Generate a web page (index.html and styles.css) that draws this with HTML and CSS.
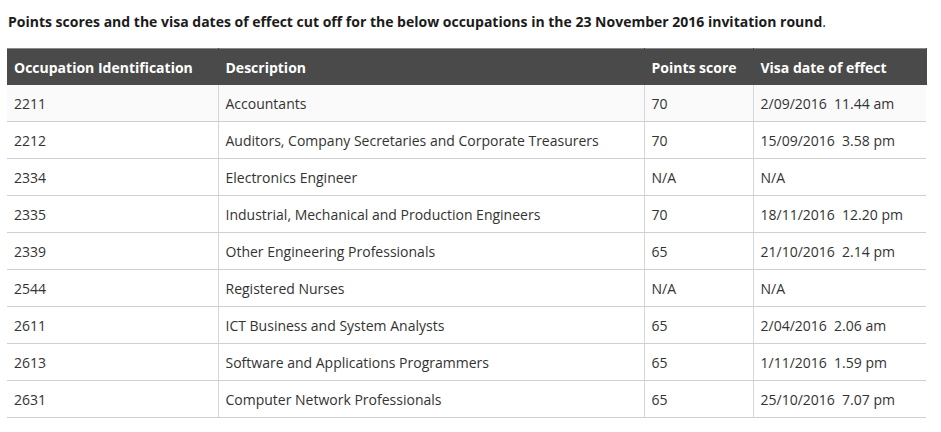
FILE: index.html
```html
<!DOCTYPE html>
<html lang="en">
<head>
<meta charset="utf-8">
<title>Invitation round</title>
<link rel="stylesheet" href="styles.css">
</head>
<body>
<div class="page">
  <p class="intro"><strong>Points scores and the visa dates of effect cut off for the below occupations in the 23 November 2016 invitation round</strong>.</p>
  <table class="occ">
    <colgroup>
      <col class="c1"><col class="c2"><col class="c3"><col class="c4">
    </colgroup>
    <thead>
      <tr><th>Occupation Identification</th><th>Description</th><th>Points score</th><th>Visa date of effect</th></tr>
    </thead>
    <tbody>
      <tr><td>2211</td><td>Accountants</td><td>70</td><td>2/09/2016&nbsp; 11.44 am</td></tr>
      <tr><td>2212</td><td>Auditors, Company Secretaries and Corporate Treasurers</td><td>70</td><td>15/09/2016&nbsp; 3.58 pm</td></tr>
      <tr><td>2334</td><td>Electronics Engineer</td><td>N/A</td><td>N/A</td></tr>
      <tr><td>2335</td><td>Industrial, Mechanical and Production Engineers</td><td>70</td><td>18/11/2016&nbsp; 12.20 pm</td></tr>
      <tr><td>2339</td><td>Other Engineering Professionals</td><td>65</td><td>21/10/2016&nbsp; 2.14 pm</td></tr>
      <tr><td>2544</td><td>Registered Nurses</td><td>N/A</td><td>N/A</td></tr>
      <tr><td>2611</td><td>ICT Business and System Analysts</td><td>65</td><td>2/04/2016&nbsp; 2.06 am</td></tr>
      <tr><td>2613</td><td>Software and Applications Programmers</td><td>65</td><td>1/11/2016&nbsp; 1.59 pm</td></tr>
      <tr><td>2631</td><td>Computer Network Professionals</td><td>65</td><td>25/10/2016&nbsp; 7.07 pm</td></tr>
    </tbody>
  </table>
</div>
</body>
</html>
```
FILE: styles.css
```css
html, body {
  margin: 0;
  padding: 0;
  background: #ffffff;
}
body {
  font-family: "Open Sans", "Liberation Sans", sans-serif;
  font-size: 14px;
  color: #333333;
}
.page {
  padding: 12px 15px 0 7px;
}
.intro {
  margin: 0 0 16px 1px;
  line-height: 20px;
  color: #1b1b1b;
}
.intro strong {
  font-weight: 700;
}
.occ {
  width: 919px;
  border-collapse: collapse;
  table-layout: fixed;
}
.c1 { width: 211px; }
.c2 { width: 426px; }
.c3 { width: 109px; }
.c4 { width: 173px; }
.occ th {
  background: #4a4a4a;
  color: #ffffff;
  font-weight: 700;
  text-align: left;
  height: 36px;
  padding: 0 7px;
  border-top: 1px solid #8a8a8a;
  border-right: 1px solid #4a4a4a;
  white-space: nowrap;
}
.occ td {
  height: 36px;
  padding: 0 7px;
  border-bottom: 1px solid #cfcfcf;
  border-left: 1px solid #d6d6d6;
  white-space: nowrap;
}
.occ td:first-child {
  border-left: none;
}
.occ tbody tr:first-child td {
  background: #fafafa;
}
```
